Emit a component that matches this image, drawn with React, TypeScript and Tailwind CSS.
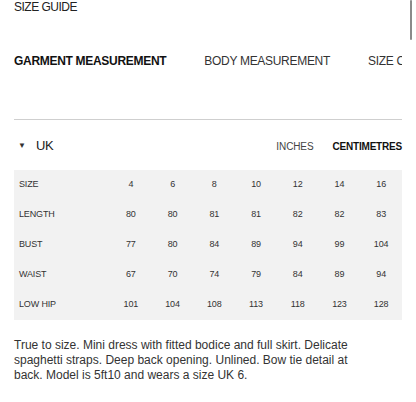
export default function App() {
  const sizes = ["4", "6", "8", "10", "12", "14", "16"];
  const rows: { label: string; values: string[] }[] = [
    { label: "LENGTH", values: ["80", "80", "81", "81", "82", "82", "83"] },
    { label: "BUST", values: ["77", "80", "84", "89", "94", "99", "104"] },
    { label: "WAIST", values: ["67", "70", "74", "79", "84", "89", "94"] },
    { label: "LOW HIP", values: ["101", "104", "108", "113", "118", "123", "128"] },
  ];

  return (
    <div
      className="relative w-[416px] h-[402px] overflow-hidden bg-white text-[#222]"
      style={{ fontFamily: '"Liberation Sans", Arial, sans-serif' }}
    >
      {/* scrollbar thumb */}
      <div className="absolute right-[4px] top-0 w-[2px] h-[40px] rounded-full bg-[#8a8a8a]" />

      <div className="px-[14px]">
        <div className="h-[14px] text-[12px] leading-[14px] tracking-[-0.5px] text-[#222]">SIZE GUIDE</div>

        {/* Tabs */}
        <div className="mt-[40px] flex gap-[38px] overflow-hidden whitespace-nowrap text-[12px] leading-[15px] tracking-[-0.3px]">
          <span className="font-bold text-[#111]">GARMENT MEASUREMENT</span>
          <span className="text-[#333]">BODY MEASUREMENT</span>
          <span className="text-[#333]">SIZE CHART</span>
        </div>

        <div className="mt-[50px] h-[1px] bg-[#cfcfcf]" />

        {/* Region + units */}
        <div className="mt-[18px] flex items-center h-[16px]">
          <span className="text-[8px] text-[#333] ml-[4px]">▼</span>
          <span className="ml-[10px] text-[13px] tracking-[-0.3px] text-[#222]">UK</span>
          <span className="ml-auto text-[10px] tracking-[-0.1px] text-[#444]">INCHES</span>
          <span className="ml-[19px] text-[10px] tracking-[-0.2px] font-bold text-[#111]">CENTIMETRES</span>
        </div>

        {/* Table */}
        <div className="mt-[16px] bg-[#f2f2f2] text-[9px] tracking-[-0.15px] text-[#333]">
          <div className="grid grid-cols-[96px_repeat(7,1fr)] h-[30px] items-center">
            <span className="pl-[5px]">SIZE</span>
            {sizes.map((s) => (
              <span key={s} className="text-center">{s}</span>
            ))}
          </div>
          {rows.map((r) => (
            <div key={r.label} className="grid grid-cols-[96px_repeat(7,1fr)] h-[30px] items-center">
              <span className="pl-[5px]">{r.label}</span>
              {r.values.map((v, i) => (
                <span key={i} className="text-center">{v}</span>
              ))}
            </div>
          ))}
        </div>

        <p className="mt-[18px] w-[345px] text-[12px] leading-[15px] text-[#333]">
          True to size. Mini dress with fitted bodice and full skirt. Delicate spaghetti straps. Deep back
          opening. Unlined. Bow tie detail at back. Model is 5ft10 and wears a size UK 6.
        </p>
      </div>
    </div>
  );
}
